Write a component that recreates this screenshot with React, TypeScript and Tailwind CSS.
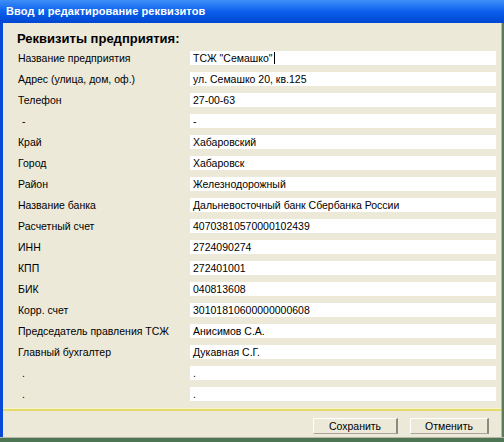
import React from "react";

const rows: [string, string][] = [
  ["Название предприятия", "ТСЖ \"Семашко\""],
  ["Адрес (улица, дом, оф.)", "ул. Семашко 20, кв.125"],
  ["Телефон", "27-00-63"],
  ["-", "-"],
  ["Край", "Хабаровский"],
  ["Город", "Хабаровск"],
  ["Район", "Железнодорожный"],
  ["Название банка", "Дальневосточный банк Сбербанка России"],
  ["Расчетный счет", "40703810570000102439"],
  ["ИНН", "2724090274"],
  ["КПП", "272401001"],
  ["БИК", "040813608"],
  ["Корр. счет", "30101810600000000608"],
  ["Председатель правления ТСЖ", "Анисимов С.А."],
  ["Главный бухгалтер", "Дукавная С.Г."],
  [".", "."],
  [".", "."],
];

function Button({ label, w }: { label: string; w: string }) {
  return (
    <button
      className={`${w} h-[16px] bg-[#ece9d8] border-t border-l border-t-[#ffffff] border-l-[#ffffff] border-r-2 border-b border-r-[#8c8a80] border-b-[#a8a598] text-[10.5px] leading-[14px] text-black`}
    >
      {label}
    </button>
  );
}

export default function App() {
  return (
    <div
      className="w-[504px] h-[442px] flex flex-col bg-[#ece9d8] overflow-hidden"
      style={{ fontFamily: '"Liberation Sans", Arial, sans-serif' }}
    >
      {/* Title bar */}
      <div className="h-[23px] shrink-0 flex items-center pl-[6px] bg-gradient-to-b from-[#3d8ff7] via-[#0a5fec] to-[#0046d2]">
        <span className="text-white font-bold text-[11px] tracking-[0.1px]">
          Ввод и редактирование реквизитов
        </span>
      </div>

      <div className="flex-1 flex min-h-0">
        {/* left frame */}
        <div className="w-[3px] bg-[#0a48d8]" />
        <div className="flex-1 flex flex-col min-w-0">
          {/* form */}
          <div className="flex-1 pl-[14px] pr-[5px]">
            <div className="h-[28px] flex items-center font-bold text-[13px] leading-none pt-[2px] text-black">
              Реквизиты предприятия:
            </div>
            <div className="flex flex-col gap-[7px]">
              {rows.map(([label, value], i) => {
                const mark = label === "-" || label === ".";
                return (
                  <div key={i} className="flex h-[14px] items-center">
                    <div
                      className={`w-[173px] text-[10.5px] leading-none text-black ${mark ? "pl-[5px]" : "pl-[1px]"}`}
                    >
                      {label}
                    </div>
                    <div className="flex-1 h-[14px] bg-white flex items-center pl-[3px] text-[10.5px] leading-none text-black">
                      {value}
                      {i === 0 && <span className="inline-block w-[1px] h-[12px] bg-black ml-[1px]" />}
                    </div>
                  </div>
                );
              })}
            </div>
          </div>
          {/* separator */}
          <div className="h-[1px] bg-[#f6f3c8]" />
          <div className="h-[2px] bg-[#e4dc6a]" />
          {/* footer */}
          <div className="h-[26px] flex items-center justify-end gap-[12px] pr-[12px] pt-[3px]">
            <Button label="Сохранить" w="w-[85px]" />
            <Button label="Отменить" w="w-[79px]" />
          </div>
        </div>
        {/* right frame */}
        <div className="w-[3px] flex">
          <div className="w-[1px] bg-[#b9b8a8]" />
          <div className="w-[2px] bg-[#5c7a5a]" />
        </div>
      </div>
      {/* bottom frame */}
      <div className="h-[1px] bg-[#b9b8a8] shrink-0" />
      <div className="h-[4px] bg-[#4f7654] shrink-0" />
    </div>
  );
}
